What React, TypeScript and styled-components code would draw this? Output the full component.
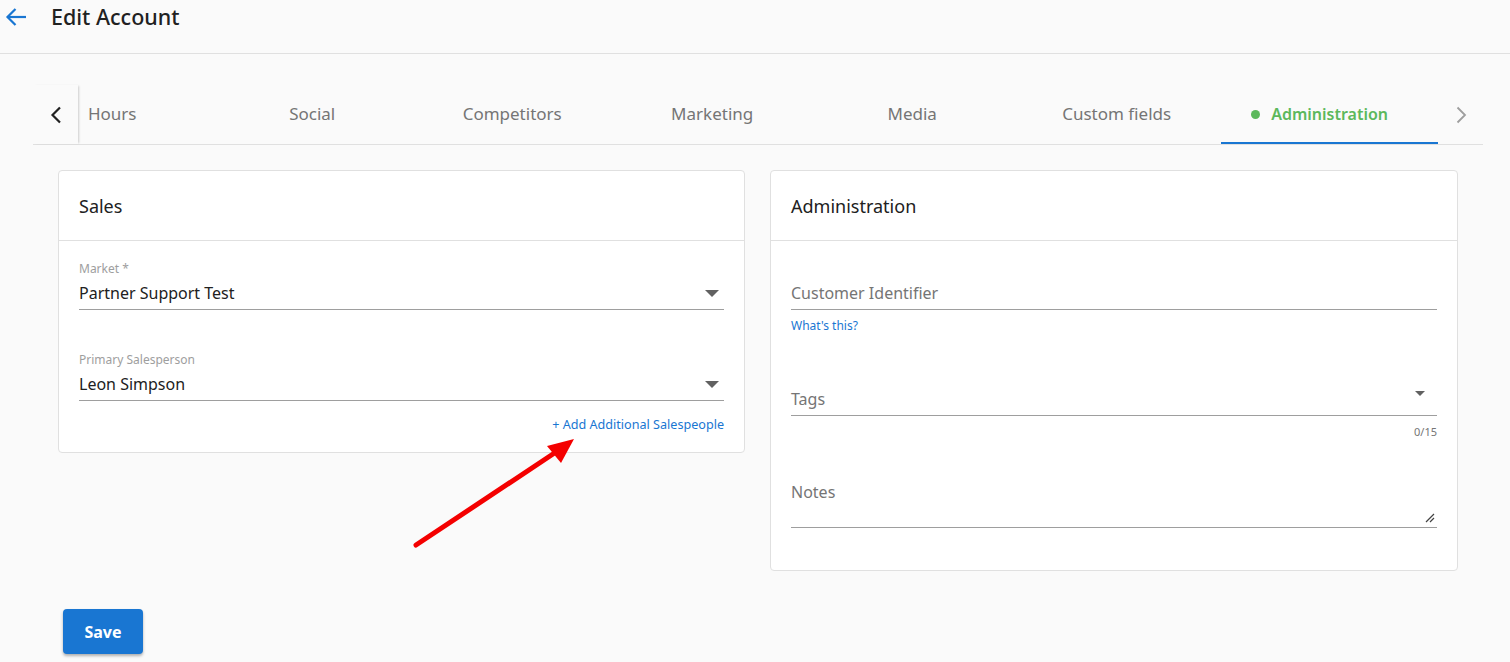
import React from "react";
import styled, { createGlobalStyle } from "styled-components";

const Global = createGlobalStyle`
  html, body { margin: 0; padding: 0; background: #fafafa; }
  body { font-family: "Noto Sans", "Open Sans", Arial, sans-serif; color: #212121; }
  * { box-sizing: border-box; }
`;

const Page = styled.div`
  position: relative;
  width: 1510px;
  min-height: 662px;
  background: #fafafa;
`;

const Header = styled.header`
  height: 54px;
  border-bottom: 1px solid #e0e0e0;
  display: flex;
  align-items: flex-start;
  padding: 3px 0 0 4px;
  gap: 23px;
`;

const BackButton = styled.button`
  width: 24px;
  height: 28px;
  border: none;
  background: none;
  padding: 0;
  display: flex;
  align-items: center;
  justify-content: center;
  color: #1976d2;
`;

const Title = styled.h1`
  margin: 0;
  font-size: 21.5px;
  font-weight: 500;
  line-height: 28px;
  color: #212121;
`;

const Content = styled.main`
  padding: 31px 27px 0 33px;
`;

const TabBar = styled.nav`
  display: flex;
  height: 60px;
  border-bottom: 1px solid #e0e0e0;
`;

const ScrollButton = styled.button<{ $side: "left" | "right" }>`
  flex: 0 0 45px;
  border: none;
  background: #fafafa;
  padding: 0;
  display: flex;
  align-items: center;
  justify-content: center;
  color: ${(p) => (p.$side === "left" ? "#212121" : "#9e9e9e")};
  box-shadow: ${(p) => (p.$side === "left" ? "2px 0 2px -1px rgba(0,0,0,0.18)" : "none")};
  z-index: 1;
`;

const TabViewport = styled.div`
  flex: 1;
  overflow: hidden;
  display: flex;
  justify-content: flex-end;
`;

const Tab = styled.div<{ $active?: boolean }>`
  position: relative;
  flex: 0 0 auto;
  min-width: 200px;
  padding: 0 50px;
  display: flex;
  align-items: center;
  justify-content: center;
  font-size: ${(p) => (p.$active ? 16 : 17)}px;
  color: ${(p) => (p.$active ? "#5cb85c" : "#757575")};
  font-weight: ${(p) => (p.$active ? 600 : 400)};
  border-bottom: 2px solid ${(p) => (p.$active ? "#1976d2" : "transparent")};
  white-space: nowrap;
`;

const TabLabel = styled.span`
  position: relative;
`;

const Dot = styled.span`
  position: absolute;
  left: -20px;
  top: 50%;
  width: 9px;
  height: 9px;
  margin-top: -4px;
  border-radius: 50%;
  background: #5cb85c;
`;

const Cards = styled.div`
  display: grid;
  grid-template-columns: 687px 688px;
  gap: 25px;
  padding: 25px 25px 0;
  align-items: start;
`;

const Card = styled.section`
  background: #fff;
  border: 1px solid #e0e0e0;
  border-radius: 4px;
`;

const CardHeader = styled.div`
  height: 70px;
  border-bottom: 1px solid #e0e0e0;
  display: flex;
  align-items: center;
  padding: 1px 20px 0;
  font-size: 18px;
  color: #212121;
`;

const CardBody = styled.div<{ $bottom: number }>`
  padding: 20px 20px ${(p) => p.$bottom}px;
  display: flex;
  flex-direction: column;
`;

const Field = styled.div<{ $top?: number }>`
  margin-top: ${(p) => p.$top ?? 0}px;
`;

const Label = styled.div`
  font-size: 12px;
  line-height: 16px;
  height: 16px;
  color: #9e9e9e;
`;

const InputRow = styled.div`
  display: flex;
  align-items: center;
  height: 33px;
  border-bottom: 1px solid #9e9e9e;
  font-size: 16px;
  position: relative;
`;

const TextareaRow = styled.div`
  display: flex;
  align-items: flex-start;
  height: 53px;
  padding-top: 6px;
  border-bottom: 1px solid #9e9e9e;
  font-size: 16px;
  position: relative;
`;

const Value = styled.span<{ $placeholder?: boolean }>`
  flex: 1;
  color: ${(p) => (p.$placeholder ? "#757575" : "#212121")};
`;

const Caret = styled.span<{ $small?: boolean; $raise?: number }>`
  width: 0;
  height: 0;
  border-left: ${(p) => (p.$small ? 5 : 7)}px solid transparent;
  border-right: ${(p) => (p.$small ? 5 : 7)}px solid transparent;
  border-top: ${(p) => (p.$small ? 5 : 7)}px solid #616161;
  margin-right: ${(p) => (p.$small ? 12 : 5)}px;
  margin-bottom: ${(p) => p.$raise ?? 0}px;
`;

const Resize = styled.span`
  position: absolute;
  right: 2px;
  bottom: 4px;
  color: #424242;
  display: flex;
`;

const LinkRow = styled.div<{ $top: number; $right?: boolean }>`
  margin-top: ${(p) => p.$top}px;
  display: flex;
  justify-content: ${(p) => (p.$right ? "flex-end" : "flex-start")};
`;

const Link = styled.a<{ $size: number }>`
  font-size: ${(p) => p.$size}px;
  line-height: 16px;
  color: #1976d2;
  text-decoration: none;
`;

const Counter = styled.div`
  margin-top: 8px;
  text-align: right;
  font-size: 11px;
  line-height: 16px;
  color: #757575;
`;

const Footer = styled.div`
  padding: 38px 0 0 30px;
`;

const SaveButton = styled.button`
  width: 80px;
  height: 45px;
  border: none;
  border-radius: 4px;
  background: #1976d2;
  color: #fff;
  font-family: inherit;
  font-size: 16px;
  font-weight: 700;
  box-shadow: 0 2px 3px rgba(0, 0, 0, 0.3);
`;

const Annotation = styled.svg`
  position: absolute;
  left: 0;
  top: 0;
  pointer-events: none;
`;

const tabs = ["Hours", "Social", "Competitors", "Marketing", "Media", "Custom fields"];

export default function App() {
  return (
    <Page>
      <Global />
      <Header>
        <BackButton aria-label="Back">
          <svg width="22" height="20" viewBox="0 0 22 20" fill="none" stroke="currentColor" strokeWidth="2.2">
            <path d="M21 10H2.5" />
            <path d="M10.5 2L2.5 10l8 8" />
          </svg>
        </BackButton>
        <Title>Edit Account</Title>
      </Header>
      <Content>
        <TabBar>
          <ScrollButton $side="left" aria-label="Previous">
            <svg width="14" height="18" viewBox="0 0 14 18" fill="none" stroke="currentColor" strokeWidth="2.2">
              <path d="M11 1.5L3.5 9l7.5 7.5" />
            </svg>
          </ScrollButton>
          <TabViewport>
            {tabs.map((t) => (
              <Tab key={t}>
                <TabLabel>{t}</TabLabel>
              </Tab>
            ))}
            <Tab $active>
              <TabLabel>
                <Dot />
                Administration
              </TabLabel>
            </Tab>
          </TabViewport>
          <ScrollButton $side="right" aria-label="Next">
            <svg width="14" height="18" viewBox="0 0 14 18" fill="none" stroke="currentColor" strokeWidth="1.8">
              <path d="M3.5 1.5L11 9l-7.5 7.5" />
            </svg>
          </ScrollButton>
        </TabBar>
        <Cards>
          <Card>
            <CardHeader>Sales</CardHeader>
            <CardBody $bottom={19}>
              <Field>
                <Label>Market *</Label>
                <InputRow>
                  <Value>Partner Support Test</Value>
                  <Caret />
                </InputRow>
              </Field>
              <Field $top={42}>
                <Label>Primary Salesperson</Label>
                <InputRow>
                  <Value>Leon Simpson</Value>
                  <Caret />
                </InputRow>
              </Field>
              <LinkRow $top={16} $right>
                <Link $size={12.6}>+ Add Additional Salespeople</Link>
              </LinkRow>
            </CardBody>
          </Card>
          <Card>
            <CardHeader>Administration</CardHeader>
            <CardBody $bottom={42}>
              <Field>
                <Label />
                <InputRow>
                  <Value $placeholder>Customer Identifier</Value>
                </InputRow>
              </Field>
              <LinkRow $top={8}>
                <Link $size={12}>What's this?</Link>
              </LinkRow>
              <Field $top={49}>
                <InputRow>
                  <Value $placeholder>Tags</Value>
                  <Caret $small $raise={12} />
                </InputRow>
              </Field>
              <Counter>0/15</Counter>
              <Field $top={35}>
                <TextareaRow>
                  <Value $placeholder>Notes</Value>
                  <Resize>
                    <svg width="10" height="10" viewBox="0 0 10 10" stroke="currentColor" strokeWidth="1.2">
                      <path d="M9 1L1 9M9 5L5 9" />
                    </svg>
                  </Resize>
                </TextareaRow>
              </Field>
            </CardBody>
          </Card>
        </Cards>
        <Footer>
          <SaveButton>Save</SaveButton>
        </Footer>
      </Content>
      <Annotation width="1510" height="662" viewBox="0 0 1510 662">
        <line x1="416" y1="545" x2="556" y2="452" stroke="#f40000" strokeWidth="5" strokeLinecap="round" />
        <polygon points="574,439 547,446 561,463" fill="#f40000" />
      </Annotation>
    </Page>
  );
}
